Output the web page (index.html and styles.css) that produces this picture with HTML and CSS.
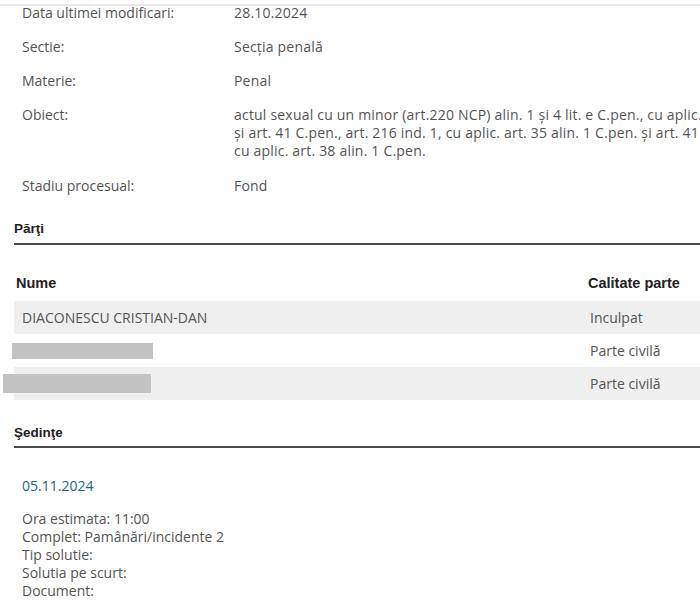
FILE: index.html
```html
<!DOCTYPE html>
<html lang="ro">
  <head>
    <meta charset="UTF-8" />
    <meta name="viewport" content="width=device-width, initial-scale=1.0" />
    <title>Dosar</title>
    <link rel="stylesheet" href="styles.css">
  </head>

  <body>
    <div class="page">
      <div class="topline"></div>

      <div class="details">
        <div class="row">
          <div class="label">Data ultimei modificari:</div>
          <div class="value">28.10.2024</div>
        </div>
        <div class="row">
          <div class="label">Sectie:</div>
          <div class="value">Secția penală</div>
        </div>
        <div class="row">
          <div class="label">Materie:</div>
          <div class="value">Penal</div>
        </div>
        <div class="row obiect">
          <div class="label">Obiect:</div>
          <div class="value">
            actul sexual cu un minor (art.220 NCP) alin. 1 și 4 lit. e C.pen., cu aplic. art. 35 alin. 1 C.pen.<br>
            și art. 41 C.pen., art. 216 ind. 1, cu aplic. art. 35 alin. 1 C.pen. și art. 41 C.pen.,<br>
            cu aplic. art. 38 alin. 1 C.pen.
          </div>
        </div>
        <div class="row">
          <div class="label">Stadiu procesual:</div>
          <div class="value">Fond</div>
        </div>
      </div>

      <h3 class="section-title parti-title">Părţi</h3>

      <table class="parti">
        <thead>
          <tr>
            <th class="col-name">Nume</th>
            <th>Calitate parte</th>
          </tr>
        </thead>
        <tbody>
          <tr class="odd">
            <td>DIACONESCU CRISTIAN-DAN</td>
            <td>Inculpat</td>
          </tr>
          <tr>
            <td><span class="redacted r1"></span></td>
            <td>Parte civilă</td>
          </tr>
          <tr class="odd">
            <td><span class="redacted r2"></span></td>
            <td>Parte civilă</td>
          </tr>
        </tbody>
      </table>

      <h3 class="section-title sedinte">Şedinţe</h3>

      <div class="sedinta">
        <div class="date">05.11.2024</div>
        <div class="info">
          Ora estimata: 11:00<br>
          Complet: Pamânări/incidente 2<br>
          Tip solutie:<br>
          Solutia pe scurt:<br>
          Document:
        </div>
      </div>
    </div>
  </body>
</html>
```

FILE: styles.css
```css
html,
body {
  margin: 0;
  padding: 0;
  background: #fff;
  overflow: hidden;
}

.page {
  width: 900px;
  font-family: "Open Sans", "Noto Sans", sans-serif;
  font-size: 14px;
  color: #555;
}

.topline {
  height: 2px;
  margin-top: 4px;
  background: #e9e9e9;
}

.details {
  margin-top: -2px;
}

.row {
  display: flex;
  line-height: 17px;
  margin-bottom: 17px;
  white-space: nowrap;
}

.row .label {
  width: 212px;
  padding-left: 22px;
  flex-shrink: 0;
}

.row .value {
  letter-spacing: 0.2px;
}

.row.obiect {
  line-height: 18px;
}

.section-title {
  margin: 0 0 0 14px;
  border-bottom: 2px solid #4a4a4a;
  font-family: "Liberation Sans", Arial, sans-serif;
  font-size: 13.5px;
  font-weight: bold;
  color: #222;
  line-height: 16px;
}

.parti-title {
  padding: 10px 0 6px 0;
}

.parti {
  margin: 19px 0 0 14px;
  border-collapse: collapse;
  width: 886px;
}

.parti th {
  font-family: "Liberation Sans", Arial, sans-serif;
  font-size: 14.5px;
  font-weight: bold;
  color: #222;
  text-align: left;
  height: 37px;
  padding: 0 0 0 2px;
  vertical-align: middle;
}

.parti th.col-name {
  width: 570px;
}

.parti td {
  height: 33px;
  padding: 0 0 0 8px;
  vertical-align: middle;
  white-space: nowrap;
}

.parti td + td {
  padding-left: 4px;
}

.parti tr.odd td {
  background: #efefef;
}

.redacted {
  display: block;
  background: #c2c2c2;
  position: relative;
}

.redacted.r1 {
  width: 141px;
  height: 16px;
  left: -10px;
}

.redacted.r2 {
  width: 148px;
  height: 19px;
  left: -19px;
}

.sedinte {
  padding: 25px 0 5px 0;
}

.sedinta {
  padding: 29px 0 0 22px;
}

.sedinta .date {
  color: #1f5f91;
  font-size: 14px;
  line-height: 18px;
}

.sedinta .info {
  margin-top: 15px;
  line-height: 18px;
}
```
